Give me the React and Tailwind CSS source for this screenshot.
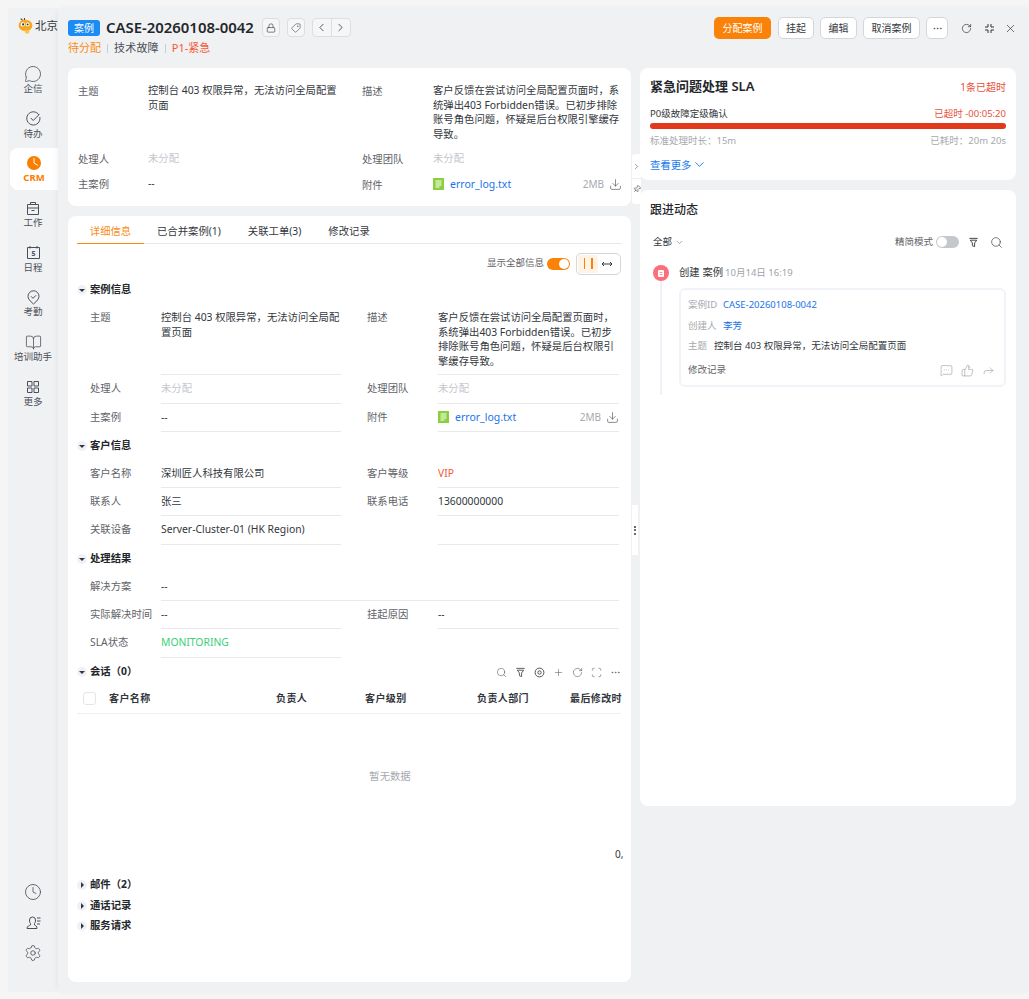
import React from 'react';
import {
  MessageCircle, BookOpen, Clock, Settings, Lock, Tag, ChevronLeft,
  ChevronRight, ChevronDown, RotateCw, X, Ellipsis, Download, Search, Plus, Pin, MessageSquareMore, ThumbsUp, Forward, Scan,
} from 'lucide-react';

const FileIcon = () => (
  <svg width="11" height="12" viewBox="0 0 11 12" className="shrink-0">
    <rect width="11" height="12" fill="#8bcf3c" />
    <path d="M2.500 3h6M2.500 5h6M2.500 7h6M2.500 9h4" stroke="#fff" strokeWidth="1" />
  </svg>
);

const FunnelIcon = ({ size = 11 }) => (
  <svg width={size} height={size} viewBox="0 0 12 12" fill="none" stroke="currentColor" strokeWidth="1">
    <path d="M1.500 1.500h9M2.500 3.500h7L7.200 6.500v4l-2.400-1V6.500z" />
  </svg>
);

const Logo = () => (
  <svg width="17" height="18" viewBox="0 0 16 17" className="shrink-0">
    <path d="M3.500 1.500l2 2M7 1l0 2" stroke="#5b3a12" strokeWidth="1" />
    <ellipse cx="8" cy="8" rx="6.500" ry="5.500" fill="#f7a823" />
    <circle cx="5.500" cy="7" r="2" fill="#fff" />
    <circle cx="5.800" cy="7" r="1" fill="#333" />
    <circle cx="10" cy="7" r="1.800" fill="#fff" />
    <circle cx="10" cy="7" r="0.900" fill="#333" />
    <path d="M7 12.500h5l-1 3H8z" fill="#fbc54d" />
  </svg>
);

function NavItem({ icon, label, active }) {
  return (
    <div className={`h-[42px] flex flex-col items-center justify-center ${active ? 'bg-white rounded-l-lg ml-[2px] text-[#fa7d00] font-bold' : 'text-[#4b5058]'}`}>
      <span className="h-[18px] flex items-center justify-center">{icon}</span>
      <span className="text-[9.500px] leading-[12px]">{label}</span>
    </div>
  );
}

function Sidebar() {
  return (
    <div className="w-[50px] shrink-0 bg-[#f0f1f3] flex flex-col">
      <div className="h-[37px] pl-[9px] pt-[9px] flex items-start gap-[1px] overflow-hidden whitespace-nowrap">
        <Logo />
        <span className="text-[11.500px] leading-[18px] text-[#33373d]">北京</span>
      </div>
      <div className="flex flex-col gap-[2.700px] mt-[14px]">
        <NavItem label="企信" icon={<MessageCircle size={18} strokeWidth={1.100} />} />
        <NavItem
          label="待办"
          icon={
            <svg width="15" height="15" viewBox="0 0 15 15" fill="none" stroke="currentColor">
              <path d="M13.800 6A6.600 6.600 0 1113 4" />
              <path d="M4.800 7l2.400 2.500 6-6" />
            </svg>
          }
        />
        <NavItem
          active
          label="CRM"
          icon={
            <svg width="14" height="14" viewBox="0 0 14 14">
              <circle cx="7" cy="7" r="7" fill="#fa7d00" />
              <path d="M7 2v5l4 2.500" stroke="#fff" strokeWidth="1" fill="none" />
            </svg>
          }
        />
        <NavItem
          label="工作"
          icon={
            <svg width="14" height="15" viewBox="0 0 14 15" fill="none" stroke="currentColor">
              <path d="M1.500 3.500h11v10h-11zM4.500 3.500V1.500h5v2M1.500 7h11M5.500 9.500h3" />
            </svg>
          }
        />
        <NavItem
          label="日程"
          icon={
            <svg width="15" height="15" viewBox="0 0 15 15" fill="none" stroke="currentColor">
              <path d="M1.500 2.500h12v11h-12zM4 1v2.500M11 1v2.500" />
              <text x="7.500" y="11" fontSize="7" fontWeight="700" textAnchor="middle" fill="currentColor" stroke="none">5</text>
            </svg>
          }
        />
        <NavItem
          label="考勤"
          icon={
            <svg width="15" height="15" viewBox="0 0 15 15" fill="none" stroke="currentColor">
              <path d="M7.500 14C4 11 2 8.800 2 6.300a5.500 5.500 0 0111 0C13 8.800 11 11 7.500 14z" />
              <path d="M5 6.300l2 2 3-3" />
            </svg>
          }
        />
        <NavItem label="培训助手" icon={<BookOpen size={17} strokeWidth={1.100} />} />
        <NavItem
          label="更多"
          icon={
            <svg width="14" height="14" viewBox="0 0 14 14" fill="none" stroke="currentColor">
              <path d="M1.500 1.500h4.500v4.500h-4.500zM8 1.500h4.500v4.500H8zM1.500 8h4.500v4.500h-4.500zM8 8h4.500v4.500H8z" />
            </svg>
          }
        />
      </div>
      <div className="mt-auto flex flex-col items-center gap-[12.500px] pb-[30px] text-[#4b5058]">
        <Clock size={18} strokeWidth={1.100} />
        <span className="h-[18px] flex items-center">
          <svg width="15" height="15" viewBox="0 0 15 15" fill="none" stroke="currentColor">
            <path d="M1 13.500c0-2.500 2.500-3 3.500-3.500V8.500C3.600 7.500 3.500 6.500 3.500 5a3 3 0 016 0c0 1.500-.1 2.500-1 3.500V10c1 .5 2.500 1 2.500 3.500z" />
            <path d="M11 3h3.500M11 6h3.500M11 9h3" />
          </svg>
        </span>
        <Settings size={18} strokeWidth={1.100} />
      </div>
    </div>
  );
}

function IconBtn({ children, className = '' }) {
  return (
    <div className={`h-[19px] flex items-center justify-center border border-[#dcdee3] rounded-[4px] bg-[#f5f6f7] text-[#33373d] ${className}`}>
      {children}
    </div>
  );
}

function Btn({ children, className = '' }) {
  return (
    <div className={`h-[22px] flex items-center justify-center border border-[#d3d6dc] rounded-[5px] bg-white text-[10px] text-[#33373d] ${className}`}>
      {children}
    </div>
  );
}

function Header() {
  return (
    <div className="h-[60px] shrink-0 pl-[10px] pr-[12px] flex items-start justify-between">
      <div className="pt-[10px]">
        <div className="flex items-center h-[19px]">
          <span className="w-[32px] h-[16px] bg-[#1b8cf5] rounded-[3px] text-white text-[10px] leading-[16px] text-center">案例</span>
          <span className="ml-[6px] text-[14.900px] leading-[19px] font-semibold text-[#23262b]">CASE-20260108-0042</span>
          <IconBtn className="ml-[8px] w-[18px]"><Lock size={10} strokeWidth={1.500} /></IconBtn>
          <IconBtn className="ml-[7px] w-[18px]"><Tag size={10} strokeWidth={1.300} className="rotate-90" /></IconBtn>
          <IconBtn className="ml-[7px] w-[39px] !justify-between">
            <span className="flex-1 flex justify-center border-r border-[#dcdee3] h-full items-center"><ChevronLeft size={13} strokeWidth={1.500} /></span>
            <span className="flex-1 flex justify-center"><ChevronRight size={13} strokeWidth={1.500} /></span>
          </IconBtn>
        </div>
        <div className="mt-[4px] flex items-center text-[11px] leading-[14px]">
          <span className="text-[#fa8c16]">待分配</span>
          <span className="mx-[6px] w-px h-[9px] bg-[#c9ccd1]" />
          <span className="text-[#4b5058] tracking-[0.200px]">技术故障</span>
          <span className="mx-[6px] w-px h-[9px] bg-[#c9ccd1]" />
          <span className="text-[#f5583a]">P1-紧急</span>
        </div>
      </div>
      <div className="pt-[9px] flex items-center">
        <div className="w-[57px] h-[22px] flex items-center justify-center rounded-[5px] bg-[#fa8208] text-white text-[10px]">分配案例</div>
        <Btn className="w-[36px] ml-[7px]">挂起</Btn>
        <Btn className="w-[37px] ml-[6px]">编辑</Btn>
        <Btn className="w-[57px] ml-[6px]">取消案例</Btn>
        <Btn className="w-[22px] ml-[6px]"><Ellipsis size={11} strokeWidth={1.200} /></Btn>
        <RotateCw size={11} strokeWidth={1.500} className="ml-[13px] text-[#33373d]" />
        <svg width="9" height="9" viewBox="0 0 9 9" fill="none" stroke="#33373d" className="ml-[13px]">
          <path d="M3 0V3H0M6 0V3H9M3 9V6H0M6 9V6H9" />
        </svg>
        <X size={13} strokeWidth={1.300} className="ml-[10px] text-[#33373d]" />
      </div>
    </div>
  );
}

function Attachment() {
  return (
    <div className="flex items-center h-[14px]">
      <FileIcon />
      <span className="ml-[6px] text-[#1a73e8] text-[10.500px]">error_log.txt</span>
      <span className="ml-auto text-[10px] text-[#a6a9ae]">2MB</span>
      <Download size={13} strokeWidth={1.200} className="ml-[5px] text-[#4b5058]" />
    </div>
  );
}

const subject = '控制台 403 权限异常，无法访问全局配置页面';
const desc = '客户反馈在尝试访问全局配置页面时，系统弹出403 Forbidden错误。已初步排除账号角色问题，怀疑是后台权限引擎缓存导致。';

function SummaryCard() {
  return (
    <div className="h-[138px] bg-white rounded-lg pl-[10px] pr-[9px] pt-[15px] text-[10.350px] leading-[14.500px] text-[#33373d] grid grid-cols-[70px_196px_18px_71px_1fr] grid-rows-[68px_26px_26px]">
      <span className="text-[#5f6368] pt-[1px]">主题</span>
      <span>{subject}</span>
      <span />
      <span className="text-[#5f6368] pt-[1px]">描述</span>
      <span>{desc}</span>
      <span className="text-[#5f6368] pt-[1px]">处理人</span>
      <span className="text-[#c4c7cc]">未分配</span>
      <span />
      <span className="text-[#5f6368] pt-[1px]">处理团队</span>
      <span className="text-[#c4c7cc]">未分配</span>
      <span className="text-[#5f6368]">主案例</span>
      <span className="-mt-[1px]">--</span>
      <span />
      <span className="text-[#5f6368] pt-[1px]">附件</span>
      <Attachment />
    </div>
  );
}

function Field({ label, children, h, wide, top }) {
  return (
    <div className={`flex ${wide ? 'col-span-2' : ''}`} style={{ height: h }}>
      <span className={`w-[71px] shrink-0 ${top ? 'pt-[5px]' : 'pt-[6px]'} text-[#5f6368]`}>{label}</span>
      <div className={`flex-1 min-w-0 ${top ? 'pt-[5px]' : 'pt-[6px]'} border-b border-[#e8e9ec]`}>{children}</div>
    </div>
  );
}

function Section({ title, open = true }) {
  return (
    <div className="h-[14px] flex items-center gap-[3px] text-[10.350px] font-bold text-[#23262b]">
      <span className="w-[10px] h-[10px] rounded-full bg-[#f0f1f8] flex items-center justify-center">
        {open ? (
          <span className="border-x-[3px] border-x-transparent border-t-[3px] border-t-[#33373d]" />
        ) : (
          <span className="border-y-[3px] border-y-transparent border-l-[3px] border-l-[#33373d]" />
        )}
      </span>
      {title}
    </div>
  );
}

function DetailCard() {
  const grid = 'pl-[13px] pr-[3px] grid grid-cols-[251px_252px] gap-x-[26px] text-[10.350px] leading-[14.500px] text-[#33373d]';
  return (
    <div className="flex-1 mt-[10px] bg-white rounded-lg px-[9px] pt-[3px] relative min-h-0">
      <div className="h-[25px] flex border-b border-[#e6e7ea] text-[10.350px] text-[#33373d] leading-[24px]">
        <span className="w-[67px] text-center text-[#fa8c16] border-b-[1.500px] border-[#fa8c16] h-[25px]">详细信息</span>
        <span className="ml-[13px]">已合并案例(1)</span>
        <span className="ml-[27px]">关联工单(3)</span>
        <span className="ml-[27px]">修改记录</span>
      </div>
      <div className="h-[39px] flex items-center justify-end pr-[1px] text-[9.500px] text-[#5f6368]">
        显示全部信息
        <span className="ml-[3px] w-[23px] h-[12px] rounded-full bg-[#fa8208] flex items-center justify-end pr-[1px]">
          <span className="w-[10px] h-[10px] rounded-full bg-white" />
        </span>
        <span className="ml-[6px] w-[45px] h-[22px] rounded-[5px] border border-[#d3d6dc] flex items-center p-[1px]">
          <span className="w-[20px] h-full rounded-[3px] bg-[#fff3e6] flex items-center justify-center gap-[6px]">
            <span className="w-[1.500px] h-[11px] bg-[#fa8208]" />
            <span className="w-[1.500px] h-[11px] bg-[#fa8208]" />
          </span>
          <svg width="12" height="8" viewBox="0 0 12 8" fill="none" stroke="#33373d" className="ml-[2.500px]">
            <path d="M1 4h10M3 2L1 4l2 2M9 2l2 2-2 2" />
          </svg>
        </span>
      </div>
      <Section title="案例信息" />
      <div className={`${grid} mt-[8px]`}>
        <Field label="主题" h="70px" top>{subject}</Field>
        <Field label="描述" h="70px" top>{desc}</Field>
        <Field label="处理人" h="29px"><span className="text-[#c4c7cc]">未分配</span></Field>
        <Field label="处理团队" h="29px"><span className="text-[#c4c7cc]">未分配</span></Field>
        <Field label="主案例" h="28px">--</Field>
        <Field label="附件" h="28px"><Attachment /></Field>
      </div>
      <div className="mt-[7px]"><Section title="客户信息" /></div>
      <div className={`${grid} mt-[7px]`}>
        <Field label="客户名称" h="28px">深圳匠人科技有限公司</Field>
        <Field label="客户等级" h="28px"><span className="text-[#f5583a]">VIP</span></Field>
        <Field label="联系人" h="28px">张三</Field>
        <Field label="联系电话" h="28px">13600000000</Field>
        <Field label="关联设备" h="29px">Server-Cluster-01 (HK Region)</Field>
        <Field label="" h="29px"> </Field>
      </div>
      <div className="mt-[7px]"><Section title="处理结果" /></div>
      <div className={`${grid} mt-[7px]`}>
        <Field label="解决方案" h="28px" wide>--</Field>
        <Field label="实际解决时间" h="28px">--</Field>
        <Field label="挂起原因" h="28px">--</Field>
        <Field label="SLA状态" h="29px"><span className="text-[#3ccf7a]">MONITORING</span></Field>
      </div>
      <div className="mt-[7px] flex items-center justify-between">
        <Section title="会话（0）" />
        <div className="flex items-center gap-[8px] text-[#4b5058] pr-[1px]">
          <Search size={11} strokeWidth={1.200} />
          <FunnelIcon size={11} />
          <svg width="11" height="11" viewBox="0 0 10 10" fill="none" stroke="currentColor" strokeWidth="0.900">
            <circle cx="5" cy="5" r="4" />
            <circle cx="5" cy="5" r="1.500" />
          </svg>
          <Plus size={11} strokeWidth={1.100} />
          <RotateCw size={11} strokeWidth={1.200} />
          <Scan size={11} strokeWidth={1.200} />
          <Ellipsis size={11} strokeWidth={1.200} />
        </div>
      </div>
      <div className="h-[35px] w-[544px] pt-[5px] border-b-[1.500px] border-[#eeeff2] flex items-center whitespace-nowrap text-[10px] font-semibold tracking-[0.400px] text-[#33373d]">
        <span className="shrink-0 ml-[6px] w-[13px] h-[13px] rounded-[3px] border border-[#e3e5e9]" />
        <span className="shrink-0 ml-[13px] w-[167px]">客户名称</span>
        <span className="shrink-0 w-[89px]">负责人</span>
        <span className="shrink-0 w-[112px]">客户级别</span>
        <span className="shrink-0 w-[93px]">负责人部门</span>
        <span className="shrink-0">最后修改时</span>
      </div>
      <div className="h-[164px] w-[544px] relative">
        <div className="h-[125px] pl-[82px] flex items-center justify-center text-[10.350px] text-[#a6a9ae]">暂无数据</div>
        <span className="absolute left-[538px] top-[133px] text-[10px] leading-[14px] text-[#33373d]">0,</span>
      </div>
      <div className="flex flex-col gap-[6.500px]">
        <Section title="邮件（2）" open={false} />
        <Section title="通话记录" open={false} />
        <Section title="服务请求" open={false} />
      </div>
    </div>
  );
}

function SlaCard() {
  return (
    <div className="h-[112px] shrink-0 bg-white rounded-lg px-[10px] pt-[10px] text-[#33373d]">
      <div className="flex items-center justify-between h-[18px]">
        <span className="text-[13px] font-semibold text-[#23262b]">紧急问题处理 SLA</span>
        <span className="text-[10px] text-[#e8503a]">1条已超时</span>
      </div>
      <div className="mt-[11px] flex justify-between text-[9.500px] leading-[14px]">
        <span>P0级故障定级确认</span>
        <span className="text-[#e8503a]">已超时 -00:05:20</span>
      </div>
      <div className="mt-[2px] h-[6px] rounded-full bg-[#e0391b]" />
      <div className="mt-[5px] flex justify-between text-[9.500px] leading-[14px] text-[#a6a9ae]">
        <span>标准处理时长：15m</span>
        <span>已耗时：20m 20s</span>
      </div>
      <div className="mt-[9px] flex items-center text-[10.350px] leading-[14px] text-[#1a7cf0]">
        查看更多
        <ChevronDown size={15} strokeWidth={1.500} className="ml-[1px]" />
      </div>
    </div>
  );
}

function ActivityCard() {
  return (
    <div className="h-[616px] mt-[10px] shrink-0 bg-white rounded-lg pt-[11px] px-[10px] text-[#33373d]">
      <div className="text-[12px] leading-[17px] font-medium text-[#23262b]">跟进动态</div>
      <div className="mt-[17px] flex items-center h-[14px] pl-[3px] text-[9.500px]">
        <span>全部</span>
        <ChevronDown size={9} className="ml-[3px] text-[#8a8d93]" />
        <span className="ml-auto text-[#5f6368]">精简模式</span>
        <span className="ml-[3px] w-[23px] h-[12px] rounded-full bg-[#c4c7cc] flex items-center pl-[1px]">
          <span className="w-[10px] h-[10px] rounded-full bg-white" />
        </span>
        <span className="ml-[9px] text-[#33373d]"><FunnelIcon size={11} /></span>
        <Search size={13} strokeWidth={1.200} className="ml-[11px] mr-[3px]" />
      </div>
      <div className="mt-[16px] pl-[3px] flex">
        <div className="w-[16px] shrink-0 flex flex-col items-center">
          <span className="w-[16px] h-[16px] rounded-full bg-[#fb6f7d] flex items-center justify-center">
            <svg width="6" height="7" viewBox="0 0 6 7">
              <rect width="6" height="7" rx="1" fill="#fff" />
              <path d="M1.500 2.500h3M1.500 4.500h3" stroke="#fb6f7d" strokeWidth="0.700" />
            </svg>
          </span>
          <span className="w-[2px] h-[114px] bg-[#f0f1f8]" />
        </div>
        <div className="ml-[10px] flex-1">
          <div className="h-[16px] flex items-center text-[10.350px]">
            创建 案例
            <span className="ml-[2px] text-[9.500px] text-[#a0a3a8]">10月14日 16:19</span>
          </div>
          <div className="mt-[7px] h-[99px] rounded-[6px] border-2 border-[#f2f3f9] px-[7px] pt-[4px] text-[9.500px] leading-[14px]">
            <div className="flex h-[21px] items-center">
              <span className="text-[#a6a9ae] w-[35px]">案例ID</span>
              <span className="text-[#1a73e8]">CASE-20260108-0042</span>
            </div>
            <div className="flex h-[21px] items-center">
              <span className="text-[#a6a9ae] w-[35px]">创建人</span>
              <span className="text-[#1a73e8]">李芳</span>
            </div>
            <div className="flex h-[20px] items-center">
              <span className="text-[#a6a9ae] w-[26px]">主题</span>
              <span>{subject}</span>
            </div>
            <div className="mt-[6px] flex h-[16px] items-center text-[#5f6368]">
              修改记录
              <MessageSquareMore size={13} strokeWidth={1} className="ml-auto text-[#8a8d93]" />
              <ThumbsUp size={13} strokeWidth={1} className="ml-[8px] text-[#8a8d93]" />
              <Forward size={13} strokeWidth={1} className="ml-[8px] mr-[2px] text-[#8a8d93]" />
            </div>
          </div>
        </div>
      </div>
    </div>
  );
}

export default function App() {
  return (
    <div className="w-[1029px] h-[999px] overflow-hidden bg-[#f5f5f5] pl-2 pt-2 pb-[7px] flex font-['Noto_Sans','Noto_Sans_CJK_SC',sans-serif]">
      <Sidebar />
      <div className="flex-1 min-w-0 flex flex-col bg-[#f0f1f3] rounded-l-lg shadow-[-2px_0_4px_rgba(0,0,0,0.04)] relative">
        <Header />
        <div className="flex-1 min-h-0 flex pl-[10px] pr-[13px] pb-[10px] gap-[9px]">
          <div className="w-[563px] shrink-0 flex flex-col">
            <SummaryCard />
            <DetailCard />
          </div>
          <div className="flex-1 min-w-0 flex flex-col">
            <SlaCard />
            <ActivityCard />
          </div>
        </div>
        <div className="absolute left-[574px] top-[146px] w-[9px] h-[50px] bg-white rounded-l-[3px] flex flex-col items-center text-[#4b5058]">
          <span className="h-[25px] w-full flex items-center justify-center border-b border-[#eceef1]"><ChevronRight size={11} strokeWidth={1.500} /></span>
          <Pin size={8} className="mt-[6px] rotate-45" />
        </div>
        <div className="absolute left-[574px] top-[497px] w-[6px] h-[50px] bg-white flex flex-col items-center justify-center gap-[1.500px]">
          <span className="w-[2px] h-[2px] rounded-full bg-[#33373d]" />
          <span className="w-[2px] h-[2px] rounded-full bg-[#33373d]" />
          <span className="w-[2px] h-[2px] rounded-full bg-[#33373d]" />
        </div>
      </div>
    </div>
  );
}
